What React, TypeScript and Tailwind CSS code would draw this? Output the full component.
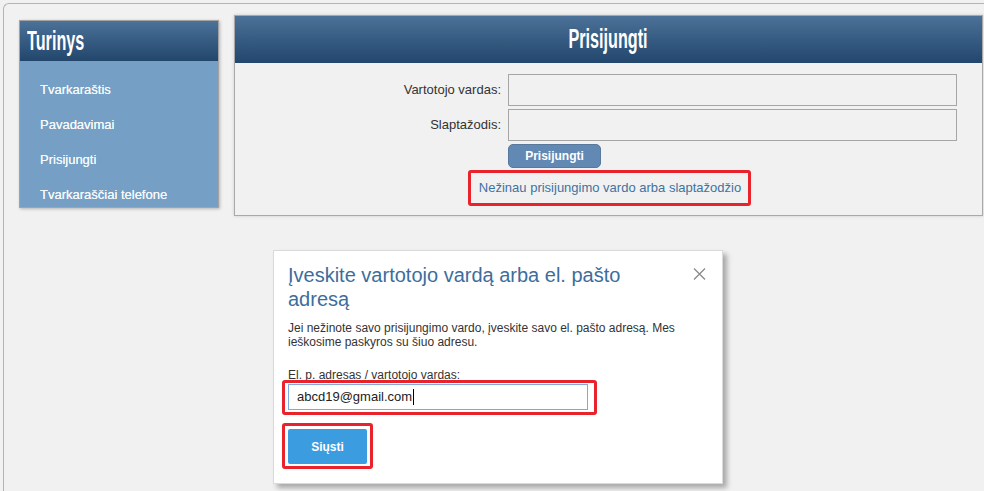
import * as React from "react";

const menuItems = ["Tvarkaraštis", "Pavadavimai", "Prisijungti", "Tvarkaraščiai telefone"];

function Sidebar() {
  return (
    <aside className="mt-[5px] w-[200px] shrink-0 border border-[#a3a3a3] shadow-[1px_1px_3px_rgba(0,0,0,0.25)]">
      <div className="h-[40px] overflow-hidden bg-gradient-to-b from-[#4c7299] to-[#22466c] pl-[7px] text-[27px] leading-[40px] font-bold text-white">
        <span className="inline-block origin-left scale-x-60">Turinys</span>
      </div>
      <ul className="flex flex-col gap-[20px] bg-[#759fc4] pt-[21px] pb-[5px]">
        {menuItems.map((item) => (
          <li key={item} className="pl-[20px] text-[13px] leading-[15px] text-[#f4f7fa] [text-shadow:0_0_0.4px_#fff]">
            {item}
          </li>
        ))}
      </ul>
    </aside>
  );
}

function LoginPanel() {
  return (
    <section className="w-[749px] shrink-0 border border-[#a9a9a9] bg-[#f1f1f1] shadow-[0_0_3px_rgba(0,0,0,0.15)]">
      <div className="h-[47px] overflow-hidden bg-gradient-to-b from-[#4c7299] to-[#22466c] text-center text-[27px] leading-[46px] font-bold text-white">
        <span className="inline-block scale-x-60">Prisijungti</span>
      </div>

      <div className="pt-[11px] pb-[19px]">
        <div className="grid grid-cols-[266px_449px] items-center gap-x-[7px] gap-y-[3px] text-[13px] text-[#333]">
          <label className="text-right">Vartotojo vardas:</label>
          <div className="h-[32px] border border-[#a6a6a6] bg-[#f1f1f1]" />
          <label className="text-right">Slaptažodis:</label>
          <div className="h-[32px] border border-[#a6a6a6] bg-[#f1f1f1]" />
          <div />
          <button className="h-[24px] w-[93px] rounded-[5px] border border-[#58799c] bg-[#6189b4] text-[12px] font-bold text-white">
            Prisijungti
          </button>
        </div>

        <div className="mt-[12px] flex justify-center pl-[3px]">
          <span className="relative text-[13px] leading-[16px] text-[#41719f]">
            Nežinau prisijungimo vardo arba slaptažodžio
            <span className="absolute -top-[10px] -right-[10px] -bottom-[10px] -left-[11px] rounded-[3px] border-[3px] border-[#e8232c]" />
          </span>
        </div>
      </div>
    </section>
  );
}

function ResetDialog() {
  return (
    <div className="ml-[254px] mt-[34px] h-[234px] w-[450px] border border-[#dadada] bg-white px-[14px] pt-[12px] shadow-[4px_4px_5px_rgba(0,0,0,0.3)]">
      <div className="flex items-start justify-between">
        <h2 className="w-[392px] text-[20px] leading-[24px] text-[#3d6d9c]">
          Įveskite vartotojo vardą arba el. pašto adresą
        </h2>
        <button className="mt-[5px] mr-[2px]">
          <svg width="13" height="12" viewBox="0 0 13 12" fill="none" stroke="#8a8a8a" strokeWidth="1.3">
            <path d="M1 0.5 L12 11.5 M12 0.5 L1 11.5" />
          </svg>
        </button>
      </div>

      <p className="mt-[10px] text-[12px] leading-[14px] text-[#333]">
        Jei nežinote savo prisijungimo vardo, įveskite savo el. pašto adresą. Mes ieškosime paskyros su šiuo adresu.
      </p>

      <label className="mt-[19px] block text-[12px] leading-[14px] text-[#333]">
        El. p. adresas / vartotojo vardas:
      </label>

      <div className="relative mt-[2px] flex h-[26px] w-[300px] items-center border border-[#7eaae0] pl-[8px] text-[13px] text-[#222]">
        abcd19@gmail.com
        <span className="ml-[1px] inline-block h-[16px] w-px bg-black" />
        <span className="absolute -top-[5px] -right-[10px] -bottom-[6px] -left-[7px] rounded-[3px] border-[3px] border-[#e8232c]" />
      </div>

      <div className="relative mt-[19px] w-[79px]">
        <button className="h-[35px] w-[79px] rounded-[2px] bg-[#3b9ce0] text-[12px] font-bold text-white">
          Siųsti
        </button>
        <span className="absolute -top-[6px] -right-[6px] -bottom-[5px] -left-[6px] rounded-[3px] border-[3px] border-[#e8232c]" />
      </div>
    </div>
  );
}

export default function App() {
  return (
    <div
      className="h-[491px] w-[984px] overflow-hidden bg-[#f1f1f1] pt-[3px] pl-[3px]"
      style={{ fontFamily: '"Liberation Sans", Arial, sans-serif' }}
    >
      <div className="h-full rounded-tl-[6px] border-t border-l border-[#b4b4b4] pt-[11px] pl-[15px]">
        <div className="flex items-start gap-[15px]">
          <Sidebar />
          <LoginPanel />
        </div>
        <ResetDialog />
      </div>
    </div>
  );
}
